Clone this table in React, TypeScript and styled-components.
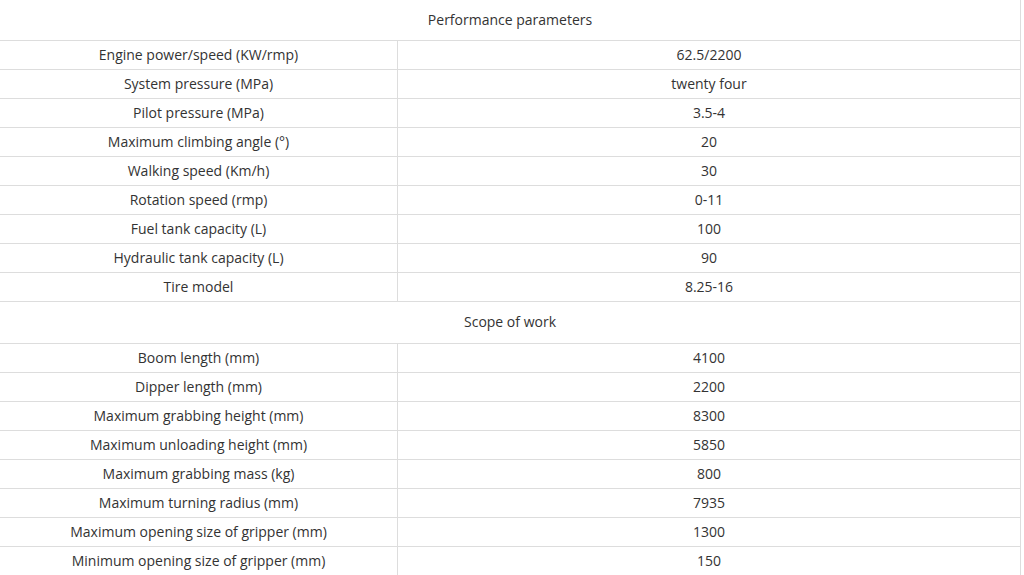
import React from "react";
import styled, { createGlobalStyle } from "styled-components";

const Global = createGlobalStyle`
  html, body { margin: 0; padding: 0; background: #fff; }
  body { font-family: "Open Sans", "Noto Sans", Arial, sans-serif; }
`;

const Table = styled.div`
  display: grid;
  grid-template-columns: 398px 623px;
  width: 1021px;
  color: #333;
  font-size: 14px;
`;

const SectionTitle = styled.div<{ $h: number }>`
  grid-column: 1 / span 2;
  height: ${(p) => p.$h}px;
  box-sizing: border-box;
  padding-bottom: 2px;
  border-bottom: 1px solid #ddd;
  border-right: 1px solid #ddd;
  display: flex;
  align-items: center;
  justify-content: center;
`;

const Cell = styled.div<{ $left?: boolean }>`
  height: 29px;
  box-sizing: border-box;
  padding-bottom: 2px;
  border-bottom: 1px solid #ddd;
  border-right: 1px solid #ddd;
  display: flex;
  align-items: center;
  justify-content: center;
  white-space: nowrap;
`;

const perf: [string, string][] = [
  ["Engine power/speed (KW/rmp)", "62.5/2200"],
  ["System pressure (MPa)", "twenty four"],
  ["Pilot pressure (MPa)", "3.5-4"],
  ["Maximum climbing angle (°)", "20"],
  ["Walking speed (Km/h)", "30"],
  ["Rotation speed (rmp)", "0-11"],
  ["Fuel tank capacity (L)", "100"],
  ["Hydraulic tank capacity (L)", "90"],
  ["Tire model", "8.25-16"],
];

const scope: [string, string][] = [
  ["Boom length (mm)", "4100"],
  ["Dipper length (mm)", "2200"],
  ["Maximum grabbing height (mm)", "8300"],
  ["Maximum unloading height (mm)", "5850"],
  ["Maximum grabbing mass (kg)", "800"],
  ["Maximum turning radius (mm)", "7935"],
  ["Maximum opening size of gripper (mm)", "1300"],
  ["Minimum opening size of gripper (mm)", "150"],
];

const Rows = ({ rows }: { rows: [string, string][] }) => (
  <>
    {rows.map(([k, v]) => (
      <React.Fragment key={k}>
        <Cell $left>{k}</Cell>
        <Cell>{v}</Cell>
      </React.Fragment>
    ))}
  </>
);

export default function App() {
  return (
    <>
      <Global />
      <Table>
        <SectionTitle $h={41}>Performance parameters</SectionTitle>
        <Rows rows={perf} />
        <SectionTitle $h={42}>Scope of work</SectionTitle>
        <Rows rows={scope} />
      </Table>
    </>
  );
}
